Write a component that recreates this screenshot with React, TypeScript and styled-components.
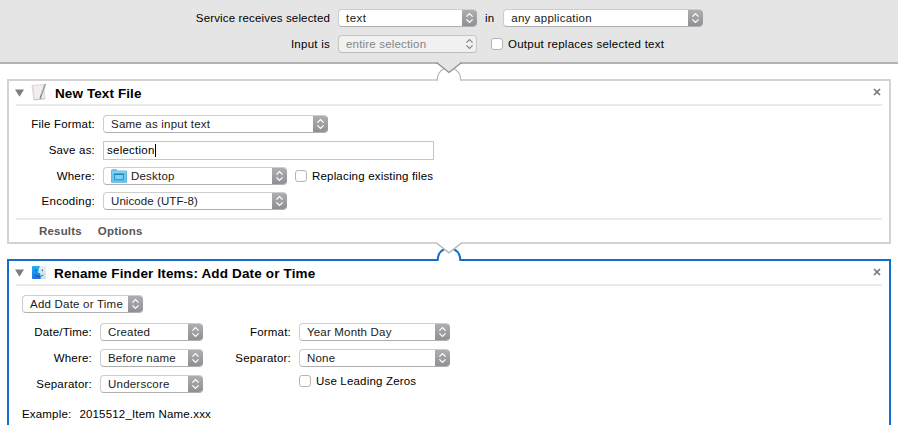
import React from 'react';
import styled, { createGlobalStyle } from 'styled-components';

const GlobalStyle = createGlobalStyle`
  *, *::before, *::after { box-sizing: border-box; }
  body { margin: 0; background: #fff; overflow: hidden; }
`;

const Window = styled.main`
  display: flex;
  flex-direction: column;
  width: 898px;
  height: 425px;
  overflow: hidden;
  background: #fff;
  color: #000;
  font-family: "Liberation Sans", Arial, sans-serif;
  font-size: 11.5px;
  line-height: 18px;
  letter-spacing: 0.18px;
  white-space: nowrap;
`;

const ServiceBar = styled.header`
  position: relative;
  flex: none;
  height: 64px;
  padding-top: 9px;
  display: flex;
  flex-direction: column;
  gap: 8px;
  background: #e5e5e5;
  border-bottom: 2px solid #b4b4b4;
`;

const Row = styled.div<{ $mt?: number; $ml?: number }>`
  display: flex;
  align-items: center;
  height: 18px;
  margin-top: ${p => p.$mt ?? 0}px;
  margin-left: ${p => p.$ml ?? 0}px;
`;

const Label = styled.span<{ $w: number; $ls?: number }>`
  flex: none;
  width: ${p => p.$w}px;
  display: flex;
  justify-content: flex-end;
  letter-spacing: ${p => p.$ls ?? 0.2}px;
`;

const Caption = styled.span<{ $ml: number; $ls?: number }>`
  margin-left: ${p => p.$ml}px;
  letter-spacing: ${p => p.$ls ?? 0.18}px;
`;

const PopUp = styled.div<{ $w: number; $ml?: number; $disabled?: boolean; $ls?: number }>`
  flex: none;
  display: flex;
  align-items: center;
  width: ${p => p.$w}px;
  height: 18px;
  margin-left: ${p => p.$ml ?? 8}px;
  padding-left: 7px;
  overflow: hidden;
  border: 1px solid ${p => (p.$disabled ? '#c6c6c6' : '#cdcdcd')};
  border-bottom-color: ${p => (p.$disabled ? '#bdbdbd' : '#b0b0b0')};
  border-right-width: ${p => (p.$disabled ? 1 : 0)}px;
  border-radius: 4px;
  background: ${p => (p.$disabled ? '#f1f1f1' : '#fff')};
  color: ${p => (p.$disabled ? '#858585' : '#1a1a1a')};
  line-height: 16px;
  letter-spacing: ${p => p.$ls ?? 0.18}px;
`;

const Stepper = styled.span<{ $disabled?: boolean }>`
  flex: none;
  display: flex;
  align-items: center;
  justify-content: center;
  width: 15px;
  height: 18px;
  margin: -1px ${p => (p.$disabled ? -1 : 0)}px -1px auto;
  color: ${p => (p.$disabled ? '#8a8a8a' : '#fff')};
  background: ${p => (p.$disabled ? 'none' : 'linear-gradient(#b0afb4, #8e8d92)')};
`;

const CheckBox = styled.span<{ $ml?: number }>`
  flex: none;
  width: 12px;
  height: 12px;
  margin-left: ${p => p.$ml ?? 8}px;
  border: 1px solid #b4b4b4;
  border-radius: 3px;
  background: #fff;
`;

const Card = styled.section<{ $selected?: boolean; $h: number; $mt: number }>`
  position: relative;
  flex: none;
  width: 884px;
  height: ${p => p.$h}px;
  margin: ${p => p.$mt}px 0 0 7px;
  border: 2px solid ${p => (p.$selected ? '#146ccf' : '#d3d3d3')};
  background: #fff;
`;

const CardHead = styled.div`
  display: flex;
  align-items: center;
  height: 25px;
  margin: 0 7px;
  padding-right: 1px;
  border-bottom: 2px solid #eaeaea;
`;

const Title = styled.h2<{ $ls: number }>`
  margin: 0 auto 0 8px;
  padding-top: 2px;
  font-size: 13.5px;
  line-height: 16px;
  font-weight: 700;
  letter-spacing: ${p => p.$ls}px;
`;

const TextField = styled.div`
  display: flex;
  align-items: center;
  width: 331px;
  height: 19px;
  margin-left: 8px;
  padding-left: 3px;
  border: 1px solid #c6c6c6;
  letter-spacing: 0.25px;
`;

const Caret = styled.span`
  width: 1px;
  height: 13px;
  background: #000;
`;

const CardFoot = styled.footer`
  display: flex;
  gap: 16px;
  height: 24px;
  margin: 8px 7px 0;
  padding: 2px 0 0 23px;
  border-top: 2px solid #eaeaea;
  color: #575757;
  font-weight: 700;
`;

const Columns = styled.div`
  display: flex;
  margin-top: 10px;
`;

const Column = styled.div`
  display: flex;
  flex-direction: column;
`;

const Connector = styled.svg<{ $x: number; $y: number }>`
  position: absolute;
  left: ${p => p.$x}px;
  top: ${p => p.$y}px;
  z-index: 1;
  display: block;
`;

const Glyph = styled.svg<{ $ml?: number; $mt?: number }>`
  flex: none;
  display: block;
  margin-left: ${p => p.$ml ?? 0}px;
  margin-top: ${p => p.$mt ?? 0}px;
`;

function Select({ w, ml, ls, disabled, children }: {
  w: number; ml?: number; ls?: number; disabled?: boolean; children: React.ReactNode;
}) {
  return (
    <PopUp $w={w} $ml={ml} $ls={ls} $disabled={disabled}>
      {children}
      <Stepper $disabled={disabled}>
        <svg width="9" height="12" viewBox="0 0 9 12" fill="none" stroke="currentColor" strokeWidth="1.3">
          <path d="M1.4 4.6 4.5 1.6 7.6 4.6M1.4 7.4l3.1 3 3.1-3" />
        </svg>
      </Stepper>
    </PopUp>
  );
}

function Disclosure() {
  return (
    <Glyph width="9" height="8" $ml={-1} $mt={1}>
      <path d="M0 0.5H9L4.5 7.8Z" fill="#7d7d7d" />
    </Glyph>
  );
}

function Close() {
  return (
    <Glyph width="8" height="8" viewBox="0 0 8 8" $mt={-1}>
      <path d="M1 1 7 7M7 1 1 7" stroke="#777" strokeWidth="1.7" />
    </Glyph>
  );
}

function TextFileIcon() {
  return (
    <Glyph width="16" height="18" viewBox="0 0 16 18" $ml={7} $mt={-2}>
      <path d="M1 2.5 12.5 1.5 14 15.5 3 17Z" fill="#f0eeee" stroke="#d4d1d1" strokeWidth="0.8" />
      <path d="M1.5 3 3.2 16.5" stroke="#eccfcf" strokeWidth="0.9" />
      <path d="M3.2 17 14 15.7" stroke="#bdbdbd" strokeWidth="0.8" />
      <path d="M14.3 1 9.8 13.5 9.2 15.8" fill="none" stroke="#85898e" strokeWidth="1.5" />
      <path d="M13.9 1 10 11.8" stroke="#c6cace" strokeWidth="0.6" />
    </Glyph>
  );
}

function FinderIcon() {
  return (
    <Glyph width="14" height="13" viewBox="0 0 14 13" $ml={8} $mt={-1}>
      <defs>
        <linearGradient id="finderLeft" x1="0" y1="0" x2="0" y2="1">
          <stop offset="0" stopColor="#20b2f6" />
          <stop offset="1" stopColor="#1c6fe2" />
        </linearGradient>
        <linearGradient id="finderRight" x1="0" y1="0" x2="0" y2="1">
          <stop offset="0" stopColor="#e6f1f8" />
          <stop offset="1" stopColor="#c8deee" />
        </linearGradient>
      </defs>
      <rect width="14" height="13" rx="1" fill="url(#finderRight)" />
      <path d="M1 0H8C6.8 2.5 6.3 4.5 6.3 7H8.2C8.1 9 8.3 11 8.8 13H1Q0 13 0 12V1Q0 0 1 0Z" fill="url(#finderLeft)" />
      <path d="M3.8 3.5V5.2M10.3 3.5V5.2" stroke="#174b7c" strokeWidth="1" />
      <path d="M2.7 8.8C5 11 9 11 11.4 8.8" fill="none" stroke="#174b7c" strokeWidth="0.9" />
    </Glyph>
  );
}

function FolderIcon() {
  return (
    <Glyph width="16" height="14" viewBox="0 0 16 14">
      <path d="M0.5 13.3V1.5Q0.5 0.7 1.3 0.7H5.3L6.6 2H15.5V13.3Z" fill="#6cc7f0" stroke="#46a9dc" strokeWidth="0.8" />
      <path d="M0.8 3.1H15.2" stroke="#9addf8" strokeWidth="1" />
      <rect x="3.6" y="5.1" width="8.8" height="5.6" fill="#7dd1f5" stroke="#2e8fc4" strokeWidth="1" />
      <path d="M3.2 5.3H12.8" stroke="#2583b8" strokeWidth="1.2" />
    </Glyph>
  );
}

export default function App() {
  return (
    <>
      <GlobalStyle />
      <Window>
        <ServiceBar>
          <Row>
            <Label $w={330} $ls={0.15}>Service receives selected</Label>
            <Select w={139} ls={0.5}>text</Select>
            <Caption $ml={8}>in</Caption>
            <Select w={200} ml={9} ls={0.26}>any application</Select>
          </Row>
          <Row>
            <Label $w={330} $ls={0.25}>Input is</Label>
            <Select w={139} disabled>entire selection</Select>
            <CheckBox $ml={14} />
            <Caption $ml={5} $ls={0.25}>Output replaces selected text</Caption>
          </Row>
          <Connector $x={434} $y={61} width="30" height="20" viewBox="0 0 30 20">
            <path d="M3.5 20V16Q4.5 10.5 9 7.8L15 12 21 7.8Q25.7 10.5 26.5 16V20Z" fill="#fff" />
            <path d="M3.2 19.5C3.4 12.6 6 9.6 10 7.5M26.8 19.5C26.6 12.6 24 9.6 20 7.5" fill="none" stroke="#b5b5b5" strokeWidth="1.2" />
            <path d="M3 0V1.5L15 11.2 27 1.5V0Z" fill="#e5e5e5" />
            <path d="M2.5 1.5 15 11.4 27.5 1.5" fill="none" stroke="#8d8d8d" strokeWidth="1.3" />
          </Connector>
        </ServiceBar>

        <Card $h={165} $mt={15}>
          <CardHead>
            <Disclosure />
            <TextFileIcon />
            <Title $ls={0.1}>New Text File</Title>
            <Close />
          </CardHead>
          <Row $mt={9}>
            <Label $w={86}>File Format:</Label>
            <Select w={225} ls={0.22}>Same as input text</Select>
          </Row>
          <Row $mt={8}>
            <Label $w={86}>Save as:</Label>
            <TextField>selection<Caret /></TextField>
          </Row>
          <Row $mt={8}>
            <Label $w={86}>Where:</Label>
            <Select w={184}>
              <FolderIcon />
              <Caption $ml={4} $ls={0.2}>Desktop</Caption>
            </Select>
            <CheckBox />
            <Caption $ml={5}>Replacing existing files</Caption>
          </Row>
          <Row $mt={7}>
            <Label $w={86} $ls={0.25}>Encoding:</Label>
            <Select w={184} ls={0.08}>Unicode (UTF-8)</Select>
          </Row>
          <CardFoot>
            <span>Results</span>
            <span>Options</span>
          </CardFoot>
        </Card>

        <Card $selected $h={180} $mt={15}>
          <CardHead>
            <Disclosure />
            <FinderIcon />
            <Title $ls={0.15}>Rename Finder Items: Add Date or Time</Title>
            <Close />
          </CardHead>
          <Row $mt={9} $ml={5}>
            <Select w={121} ls={0.22}>Add Date or Time</Select>
          </Row>
          <Columns>
            <Column>
              <Row>
                <Label $w={83}>Date/Time:</Label>
                <Select w={103}>Created</Select>
              </Row>
              <Row $mt={8}>
                <Label $w={83}>Where:</Label>
                <Select w={103}>Before name</Select>
              </Row>
              <Row $mt={8}>
                <Label $w={83}>Separator:</Label>
                <Select w={103} ls={0.22}>Underscore</Select>
              </Row>
            </Column>
            <Column>
              <Row>
                <Label $w={88}>Format:</Label>
                <Select w={151}>Year Month Day</Select>
              </Row>
              <Row $mt={8}>
                <Label $w={88}>Separator:</Label>
                <Select w={151}>None</Select>
              </Row>
              <Row $mt={5} $ml={88}>
                <CheckBox />
                <Caption $ml={5}>Use Leading Zeros</Caption>
              </Row>
            </Column>
          </Columns>
          <Row $mt={12} $ml={13}>
            <span>Example:</span>
            <Caption $ml={8}>2015512_Item Name.xxx</Caption>
          </Row>
          <Connector $x={425} $y={-20} width="30" height="21" viewBox="0 0 30 21">
            <path d="M3 0V3H27V0Z" fill="#fff" />
            <path d="M4 21V17Q5 11 10 8.5H20Q25 11 26 17V21Z" fill="#fff" />
            <path d="M3.6 20C3.6 14 5.8 10.4 10 8.4M26.4 20C26.4 14 24.2 10.4 20 8.4" fill="none" stroke="#146ccf" strokeWidth="2" />
            <path d="M4 1.5 15 10.5 26 1.5V3L15 12 4 3Z" fill="#fff" />
            <path d="M2.5 2 15 11.8 27.5 2" fill="none" stroke="#b5b5b5" strokeWidth="1.3" />
          </Connector>
        </Card>
      </Window>
    </>
  );
}
